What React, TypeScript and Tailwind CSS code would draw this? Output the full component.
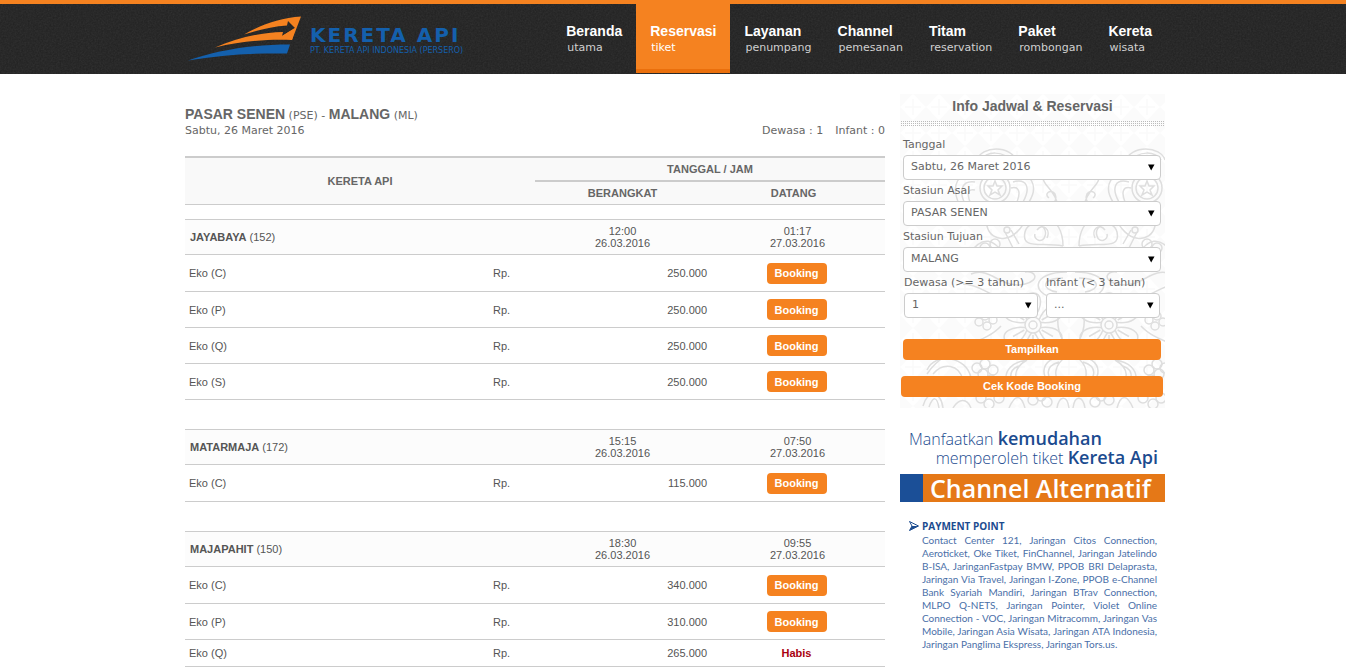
import React from 'react';

const NAV = [
  { title: 'Beranda', sub: 'utama' },
  { title: 'Reservasi', sub: 'tiket', active: true },
  { title: 'Layanan', sub: 'penumpang' },
  { title: 'Channel', sub: 'pemesanan' },
  { title: 'Titam', sub: 'reservation' },
  { title: 'Paket', sub: 'rombongan' },
  { title: 'Kereta', sub: 'wisata' },
];

const TRAINS = [
  {
    name: 'JAYABAYA',
    no: '152',
    depart: ['12:00', '26.03.2016'],
    arrive: ['01:17', '27.03.2016'],
    fares: [
      { cls: 'Eko (C)', price: '250.000', open: true },
      { cls: 'Eko (P)', price: '250.000', open: true },
      { cls: 'Eko (Q)', price: '250.000', open: true },
      { cls: 'Eko (S)', price: '250.000', open: true },
    ],
  },
  {
    name: 'MATARMAJA',
    no: '172',
    depart: ['15:15', '26.03.2016'],
    arrive: ['07:50', '27.03.2016'],
    fares: [{ cls: 'Eko (C)', price: '115.000', open: true }],
  },
  {
    name: 'MAJAPAHIT',
    no: '150',
    depart: ['18:30', '26.03.2016'],
    arrive: ['09:55', '27.03.2016'],
    fares: [
      { cls: 'Eko (C)', price: '340.000', open: true },
      { cls: 'Eko (P)', price: '310.000', open: true },
      { cls: 'Eko (Q)', price: '265.000', open: false },
    ],
  },
];

const PAYMENT_LINES = [
  'Contact Center 121, Jaringan Citos Connection,',
  'Aeroticket, Oke Tiket, FinChannel, Jaringan Jatelindo',
  'B-ISA, JaringanFastpay BMW, PPOB BRI Delaprasta,',
  'Jaringan Via Travel, Jaringan I-Zone, PPOB e-Channel',
  'Bank Syariah Mandiri, Jaringan BTrav Connection,',
  'MLPO Q-NETS, Jaringan Pointer, Violet Online',
  'Connection - VOC, Jaringan Mitracomm, Jaringan Vas',
  'Mobile, Jaringan Asia Wisata, Jaringan ATA Indonesia,',
  'Jaringan Panglima Ekspress, Jaringan Tors.us.',
];

const Logo: React.FC = () => (
  <a href="#" className="flex items-start pt-3 pl-[3px]">
    <svg className="w-[115px] h-[46px]" viewBox="0 0 115 46" aria-hidden="true">
      <path d="M0 44.500C28 35 62 28.500 102 28.500L99 37.500C64 37 34 39 0 44.500Z" fill="#1460ad" />
      <path d="M27 31.500C48 22 72 16.500 95 16L94 20L107 12L104 24C80 23 55 25 27 31.500Z" fill="#f58220" />
      <path d="M56 18.500C72 9 92 2 113 0.500L104 24L94 20L107 12L100 5L99 9.500C84 10.500 70 14 56 18.500Z" fill="#f58220" />
    </svg>
    <span className="flex flex-col pl-[7px] pt-[7px] text-[#1460ad] font-['DejaVu_Sans',sans-serif]">
      <span className="text-xl leading-6 font-bold tracking-widest">KERETA API</span>
      <span className="text-[8px] leading-2">PT. KERETA API INDONESIA (PERSERO)</span>
    </span>
  </a>
);

const Header: React.FC = () => (
  <header className="relative bg-[#212121] border-t-4 border-[#f58220]">
    <svg className="absolute inset-0 w-full h-full opacity-10" aria-hidden="true">
      <filter id="grain">
        <feTurbulence type="fractalNoise" baseFrequency="0.6" numOctaves="2" />
        <feColorMatrix type="saturate" values="0" />
      </filter>
      <rect width="100%" height="100%" filter="url(#grain)" />
    </svg>
    <div className="relative max-w-[984px] mx-auto pl-1 flex justify-between h-[70px]">
      <Logo />
      <nav className="flex pr-px">
        {NAV.map((item, i) => (
          <a
            key={item.title}
            href="#"
            className={
              item.active
                ? 'px-[14px] pt-[19px] mb-px bg-[#f58220] border-b-4 border-[#ea6f0c] text-white'
                : i === 0
                  ? 'px-[14px] pt-[19px] text-[#d0d0d0]'
                  : 'pl-[14px] pr-3 pt-[19px] text-[#d0d0d0]'
            }
          >
            <span className="block text-sm leading-4 font-bold text-white">{item.title}</span>
            <span className="block pl-px text-[11px] leading-[18px] font-['DejaVu_Sans',sans-serif]">{item.sub}</span>
          </a>
        ))}
      </nav>
    </div>
  </header>
);

const Schedule: React.FC = () => (
  <table className="w-full table-fixed border-separate border-spacing-0 text-[11px] leading-3 text-[#555]">
    <colgroup>
      <col className="w-[44%]" />
      <col className="w-[6%]" />
      <col className="w-[25%]" />
      <col className="w-[25%]" />
    </colgroup>
    <thead className="bg-[#f9f9f9] text-[#666]">
      <tr className="h-[26px]">
        <th colSpan={2} rowSpan={2} className="border-t-2 border-b border-t-[#ccc] border-b-[#ccc]">KERETA API</th>
        <th colSpan={2} className="border-y-2 border-[#ccc]">TANGGAL / JAM</th>
      </tr>
      <tr className="h-[23px]">
        <th className="border-b border-[#ccc]">BERANGKAT</th>
        <th className="pr-2 border-b border-[#ccc]">DATANG</th>
      </tr>
    </thead>
    {TRAINS.map((train, i) => (
      <React.Fragment key={train.no}>
        <tbody aria-hidden="true">
          <tr className={i === 0 ? 'h-[14px]' : 'h-[29px]'}>
            <td colSpan={4} />
          </tr>
        </tbody>
        <tbody>
          <tr className="h-9 bg-[#fcfcfc]">
            <th colSpan={2} className="pl-[5px] text-left font-normal border-y border-[#ccc]">
              <b>{train.name}</b> ({train.no})
            </th>
            <td className="text-center border-y border-[#ccc]">
              {train.depart[0]}
              <br />
              {train.depart[1]}
            </td>
            <td className="text-center border-y border-[#ccc]">
              {train.arrive[0]}
              <br />
              {train.arrive[1]}
            </td>
          </tr>
          {train.fares.map((fare, n) => (
            <tr key={fare.cls} className={!fare.open ? 'h-[27px]' : n === 0 ? 'h-[37px]' : 'h-9'}>
              <td className="pl-1 border-b border-[#ccc]">{fare.cls}</td>
              <td className="border-b border-[#ccc]">Rp.</td>
              <td className="pr-[3px] text-right border-b border-[#ccc]">{fare.price}</td>
              <td className="pr-[2px] text-center border-b border-[#ccc]">
                {fare.open ? (
                  <button className="block mx-auto h-[21px] px-2 rounded bg-[#f58220] font-bold text-white">Booking</button>
                ) : (
                  <b className="text-[#a80010]">Habis</b>
                )}
              </td>
            </tr>
          ))}
        </tbody>
      </React.Fragment>
    ))}
  </table>
);

const Flower: React.FC<{ x: number; y: number; petals: number; r: number }> = ({ x, y, petals, r }) => (
  <g transform={`translate(${x} ${y})`}>
    {Array.from({ length: petals }, (_, i) => (
      <g key={i} transform={`rotate(${(360 / petals) * i})`}>
        <path d={`M0 -6C-11 ${-r * 0.6} -9 ${-r} 0 ${-r}C9 ${-r} 11 ${-r * 0.6} 0 -6Z`} />
        <path d={`M0 -10V${-r + 9}`} />
      </g>
    ))}
    <circle r="8" fill="#fcfcfc" />
    <circle r="4" />
  </g>
);

const HalfOrnament: React.FC = () => (
  <g>
    {/* blossom with layered petals */}
    <circle cx="-76" cy="94" r="15" />
    <circle cx="-76" cy="94" r="11" />
    <path d="M-76 87L-74 92L-69 92L-73 96L-71 101L-76 98L-81 101L-79 96L-83 92L-78 92Z" />
    <path d="M-94 66C-90 52 -60 50 -54 68M-90 66C-86 57 -66 56 -60 68M-82 66C-80 60 -72 60 -70 68M-58 82C-40 76 -32 92 -42 108M-58 88C-44 84 -40 94 -48 108M-60 94C-52 92 -50 98 -54 108M-94 82C-114 76 -120 92 -112 110M-96 88C-110 86 -112 98 -106 110M-96 96C-104 94 -104 102 -100 110M-86 110C-86 122 -62 122 -62 108" />
    <path d="M-36 108C-22 118 -12 108 -16 100C-20 94 -28 100 -22 104M-12 118C-14 96 -28 92 -28 84" />
    <circle cx="-28" cy="82" r="3" />
    {/* curls */}
    <path d="M-8 152C-30 148 -50 156 -46 138C-42 124 -22 130 -26 142C-28 150 -38 146 -36 140M-8 152C-8 138 -14 126 -24 124M-34 136C-28 128 -20 136 -24 144M-44 122C-54 150 -80 150 -84 132C-84 122 -70 122 -72 132" />
    <path d="M-66 138L-58 154M-60 136L-52 150M-102 160C-88 140 -76 146 -68 160" />
    <circle cx="-64" cy="136" r="3" />
    <circle cx="-76" cy="150" r="5" />
    <circle cx="-86" cy="154" r="5" />
    <path d="M-4 178C-40 178 -40 200 -16 204M-8 184C-30 184 -30 196 -14 198M-100 180C-80 172 -70 196 -46 190C-30 186 -36 176 -46 178M-108 190C-86 190 -80 210 -54 200" />
    <Flower x={-38} y={231} petals={6} r={32} />
    {[[-86, 222], [-78, 226], [-84, 232], [-92, 228], [-76, 218]].map(([cx, cy]) => (
      <circle key={`${cx}${cy}`} cx={cx} cy={cy} r="4" />
    ))}
    <path d="M-70 232C-88 252 -124 250 -144 280M-10 212C-20 236 -4 252 0 260" />
    {/* leaves at the foot of the panel */}
    <path d="M-4 262C-34 262 -34 290 -8 294C-20 282 -16 270 -4 262ZM-12 268C-26 272 -26 284 -14 290M-44 266C-74 270 -70 300 -44 298C-60 286 -58 274 -44 266ZM-52 272C-64 276 -62 290 -52 294" />
    <path d="M-144 276C-136 258 -104 262 -100 284C-98 304 -122 308 -126 294C-128 284 -112 280 -112 290M-138 280C-128 268 -112 270 -108 286M-148 312C-144 296 -130 296 -128 314M-142 313C-138 302 -134 302 -132 314" />
    {[[-94, 274], [-86, 270], [-88, 280], [-78, 276], [-80, 286], [-30, 302], [-38, 306], [-24, 308], [-90, 304], [-82, 310], [-72, 304]].map(([cx, cy]) => (
      <circle key={`${cx}${cy}`} cx={cx} cy={cy} r="5" />
    ))}
    <path d="M-62 314C-56 300 -50 300 -46 314M-14 314C-12 302 -4 300 -2 314M-118 314C-112 304 -104 304 -100 314" />
  </g>
);

const Batik: React.FC = () => (
  <svg
    className="absolute inset-0 w-full h-full"
    viewBox="0 0 265 314"
    preserveAspectRatio="xMidYMin slice"
    fill="none"
    stroke="#dedede"
    strokeWidth="1.500"
    aria-hidden="true"
  >
    <defs>
      <pattern id="kawung" width="26" height="26" patternUnits="userSpaceOnUse">
        <path d="M13 0C20 6 20 8 26 13C20 18 20 20 13 26C6 20 6 18 0 13C6 8 6 6 13 0Z" fill="#fff" stroke="none" />
        <path d="M13 5V21M5 13H21" stroke="#fafafa" />
      </pattern>
    </defs>
    <rect width="265" height="314" fill="#fbfbfb" stroke="none" />
    <rect width="265" height="314" fill="url(#kawung)" stroke="none" />
    <g transform="translate(171 0)">
      <HalfOrnament />
      <g transform="scale(-1 1)">
        <HalfOrnament />
      </g>
    </g>
  </svg>
);

type FieldProps = { id: string; label: string; value: string; className?: string };

const Field: React.FC<FieldProps> = ({ id, label, value, className }) => (
  <div className={className}>
    <label htmlFor={id} className="block pt-px leading-5">{label}</label>
    <div className="relative">
      <select
        id={id}
        className="block w-full h-[25px] pl-[7px] pr-5 appearance-none rounded border border-[#ccc] bg-white"
      >
        <option>{value}</option>
      </select>
      <svg className="absolute right-[6px] top-[9px] w-2 h-[7px] pointer-events-none" viewBox="0 0 8 7" aria-hidden="true">
        <path d="M1 0.500H7.500L4.200 6.500Z" fill="#000" />
      </svg>
    </div>
  </div>
);

const SearchPanel: React.FC = () => (
  <section className="relative h-[314px]">
    <Batik />
    <div className="relative">
      <h2 className="pt-1 text-center text-sm leading-4 font-bold text-[#666]">Info Jadwal & Reservasi</h2>
      <div className="mt-[7px] ml-px mr-px h-[5px] flex flex-col justify-between">
        <div className="border-t border-dotted border-[#bbb]" />
        <div className="border-t border-dotted border-[#bbb]" />
        <div className="border-t border-dotted border-[#bbb]" />
      </div>
      <form className="pt-2 text-[11px] text-[#666] font-['DejaVu_Sans',sans-serif]">
        <div className="pl-[3px] pr-1">
          <Field id="tanggal" label="Tanggal" value="Sabtu, 26 Maret 2016" />
          <Field id="asal" label="Stasiun Asal" value="PASAR SENEN" />
          <Field id="tujuan" label="Stasiun Tujuan" value="MALANG" />
          <div className="flex gap-2 px-px">
            <Field id="dewasa" label="Dewasa (>= 3 tahun)" value="1" className="w-[134px]" />
            <Field id="infant" label="Infant (< 3 tahun)" value="..." className="flex-1 min-w-0 whitespace-nowrap" />
          </div>
          <button
            type="button"
            className="block w-full h-[21px] mt-[21px] rounded bg-[#f58220] text-white font-bold font-['Liberation_Sans',Arial,sans-serif]"
          >
            Tampilkan
          </button>
        </div>
        <div className="pl-px pr-[2px] pt-4">
          <button
            type="button"
            className="block w-full h-[21px] rounded bg-[#f58220] text-white font-bold font-['Liberation_Sans',Arial,sans-serif]"
          >
            Cek Kode Booking
          </button>
        </div>
      </form>
    </div>
  </section>
);

const ChannelBanner: React.FC = () => (
  <section className="pt-[21px] font-['Open_Sans','Noto_Sans',sans-serif] text-[#1b4b8f]">
    <p className="pl-[9px] text-base leading-[18px] font-light whitespace-nowrap">
      Manfaatkan <b className="text-lg leading-[18px] font-semibold">kemudahan</b>
    </p>
    <p className="pr-[7px] text-right text-base leading-[18px] font-light whitespace-nowrap">
      memperoleh tiket <b className="text-lg leading-[18px] font-semibold">Kereta Api</b>
    </p>
    <h2 className="mt-[7px] h-7 border-l-[23px] border-[#1b4f97] bg-[#e57817] pl-[7px] text-[25px] leading-7 font-semibold text-white whitespace-nowrap">
      Channel Alternatif
    </h2>
    <h3 className="mt-4 pl-[9px] flex items-center text-[10px] leading-4 font-bold">
      <svg className="w-[10px] h-[10px] mr-[3px]" viewBox="0 0 10 10" aria-hidden="true">
        <path d="M0.500 0.500L9.500 5L0.500 9.500L3 5Z" fill="#fff" stroke="#1b4b8f" />
        <path d="M3 5H9.500L0.500 9.500Z" fill="#1b4b8f" />
      </svg>
      PAYMENT POINT
    </h3>
    <p className="pl-[22px] pr-2 text-[10px] leading-[13px] text-[#4a6fa8] font-[Lato,'Open_Sans',sans-serif]">
      {PAYMENT_LINES.map((line) => (
        <span key={line} className="block text-justify [text-align-last:justify] last:[text-align-last:left]">
          {line}
        </span>
      ))}
    </p>
  </section>
);

export default function App() {
  return (
    <div className="bg-white font-['Liberation_Sans',Arial,sans-serif] text-[#666]">
      <Header />
      <div className="max-w-[984px] mx-auto pl-1 pt-5 flex gap-[15px]">
        <main className="flex-1 min-w-0 pt-[13px]">
          <div className="flex justify-between items-end mb-[18px] text-[11px] leading-[15px] font-['DejaVu_Sans',sans-serif]">
            <div>
              <h1 className="leading-[14px]">
                <b className="text-sm leading-[14px] font-['Liberation_Sans',Arial,sans-serif]">PASAR SENEN</b> (PSE) -{' '}
                <b className="text-sm leading-[14px] font-['Liberation_Sans',Arial,sans-serif]">MALANG</b> (ML)
              </h1>
              <p>Sabtu, 26 Maret 2016</p>
            </div>
            <p className="flex gap-3">
              <span>Dewasa : 1</span>
              <span>Infant : 0</span>
            </p>
          </div>
          <Schedule />
        </main>
        <aside className="w-[265px] shrink-0">
          <SearchPanel />
          <ChannelBanner />
        </aside>
      </div>
    </div>
  );
}
